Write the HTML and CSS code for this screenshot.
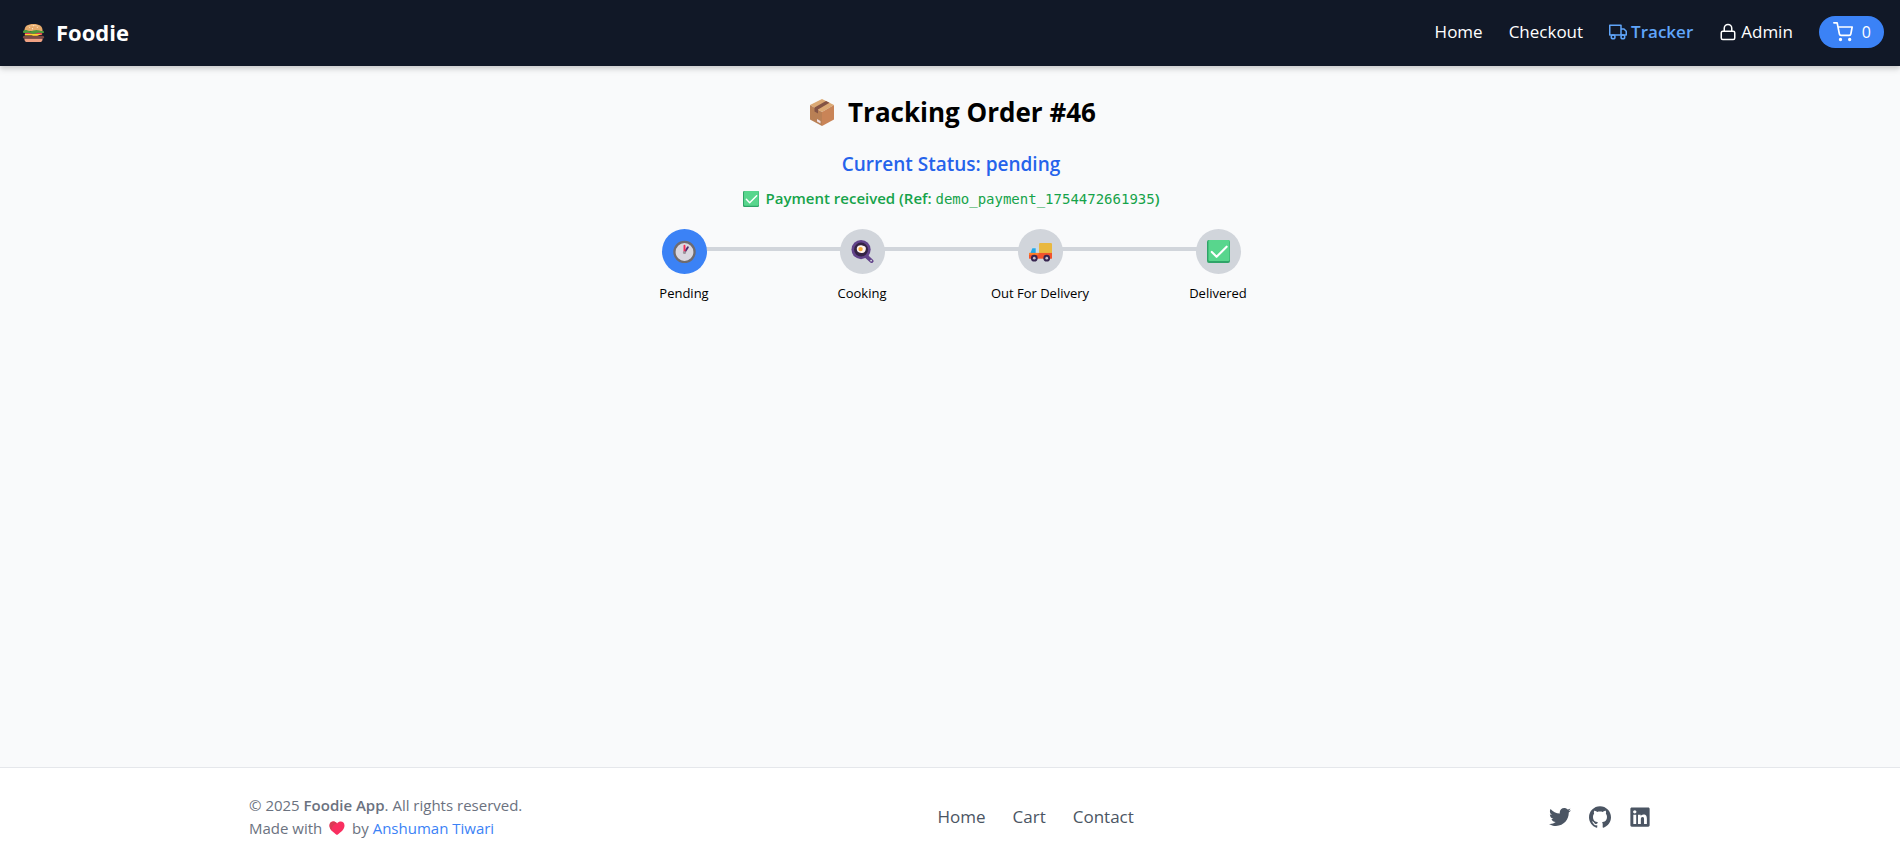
FILE: index.html
```html
<!DOCTYPE html>
<html lang="en">
<head>
<meta charset="utf-8">
<meta name="viewport" content="width=device-width, initial-scale=1">
<title>Foodie – Order Tracker</title>
<link rel="stylesheet" href="styles.css">
</head>
<body>
<svg class="defs" aria-hidden="true">
  <symbol id="check" viewBox="0 0 24 24">
    <rect x="0" y="0" width="24" height="24" rx="2" fill="#2fa468"/>
    <rect x="1.500" y="0" width="22" height="22" rx="1.500" fill="#58d68d"/>
    <path d="M5 12.500l5 5L20.500 7" fill="none" stroke="#fff" stroke-width="2.200" stroke-linecap="round" stroke-linejoin="round"/>
  </symbol>
</svg>
<header class="header">
  <a class="brand" href="#">
    <svg class="brand-icon" viewBox="0 0 24 24" aria-hidden="true">
      <path d="M2.500 10.500C2.500 5 6 3 12 3s9.500 2 9.500 7.500z" fill="#e5a96b"/>
      <path d="M5 6c2-2 10-3 14 0-4-1-10-1-14 0z" fill="#f3c58e"/>
      <g fill="#fff0d0"><circle cx="8" cy="6.500" r=".6"/><circle cx="12" cy="5" r=".6"/><circle cx="11" cy="8" r=".6"/><circle cx="16" cy="6.500" r=".6"/></g>
      <rect x="3" y="11.500" width="18" height="3" fill="#e8365d"/>
      <path d="M1 11.500c0-2 3-2.500 5-1.500s4 .8 6 0 4-1 6 0 5-.5 5 1.500-3 1-5 .7-4 1.300-6 1.300-4-1.500-6-1.300-5 1-5-.7z" fill="#4f9a3d"/>
      <path d="M3 13.500h18l-4 1.500-3 1.500-4-1.500H3z" fill="#ffd02f"/>
      <rect x="1" y="15.500" width="22" height="3" rx="1.500" fill="#7b4a45"/>
      <path d="M2.500 18.500h19c0 2.500-1 3.500-3 3.500h-13c-2 0-3-1-3-3.500z" fill="#f0a183"/>
    </svg>
    Foodie
  </a>
  <nav class="nav" aria-label="Main">
    <a href="#">Home</a>
    <a href="#">Checkout</a>
    <a class="with-icon active" href="#">
      <svg class="icon" viewBox="0 0 24 24" aria-hidden="true"><path d="M1 3h15v13H1z M16 8h4l3 3v5h-7z"/><circle cx="5.500" cy="18.500" r="2.500"/><circle cx="18.500" cy="18.500" r="2.500"/></svg>
      Tracker
    </a>
    <a class="with-icon" href="#">
      <svg class="icon" viewBox="0 0 24 24" aria-hidden="true"><rect x="3" y="11" width="18" height="11" rx="2"/><path d="M7 11V7a5 5 0 0 1 10 0v4"/></svg>
      Admin
    </a>
    <a class="cart" href="#" aria-label="Cart, 0 items">
      <svg class="cart-icon" viewBox="0 0 24 24" aria-hidden="true"><circle cx="9" cy="21" r="1"/><circle cx="20" cy="21" r="1"/><path d="M1 1h4l2.680 13.390a2 2 0 0 0 2 1.610h9.720a2 2 0 0 0 2-1.610L23 6H6"/></svg>
      <span>0</span>
    </a>
  </nav>
</header>
<main class="main">
  <h1 class="title">
    <svg class="title-icon" viewBox="0 0 24 27" aria-hidden="true">
      <path d="M12 0l12 6-12 7L0 6z" fill="#dba974"/>
      <path d="M0 6l12 7v14L0 20.500z" fill="#b98055"/>
      <path d="M24 6l-12 7v14l12-6.500z" fill="#c98457"/>
      <path d="M16 2l3.500 1.800L8 10.500v4L4.500 12.500v-4z" fill="#835344"/>
      <path d="M7 20l3.500 2v2.500L7 22.500z" fill="#f1e2e8"/>
    </svg>
    Tracking Order #46
  </h1>
  <p class="status">Current Status: pending</p>
  <p class="payment">
    <svg class="payment-icon" aria-hidden="true"><use href="#check"/></svg>
    <span>Payment received (Ref: <code>demo_payment_1754472661935</code>)</span>
  </p>
  <ol class="steps">
    <li class="step">
      <span class="dot current">
        <svg class="step-icon" viewBox="0 0 24 24" aria-hidden="true">
          <circle cx="12" cy="12.500" r="10.500" fill="#dad8e0" stroke="#6e6b70" stroke-width="2.400"/>
          <path d="M12 13l3.500-5.500" stroke="#4b2d70" stroke-width="2" stroke-linecap="round"/>
          <path d="M12 13V6" stroke="#f52b55" stroke-width="2" stroke-linecap="round"/>
          <circle cx="12" cy="13" r="1.600" fill="#9b98a0"/>
        </svg>
      </span>
      <span>Pending</span>
    </li>
    <li class="step">
      <span class="dot">
        <svg class="step-icon" viewBox="0 0 24 24" aria-hidden="true">
          <path d="M16 17l5.500 5" stroke="#62438a" stroke-width="4" stroke-linecap="round"/>
          <circle cx="21" cy="21.500" r="1" fill="#d1d5db"/>
          <circle cx="10.500" cy="10" r="10" fill="#62438a"/>
          <circle cx="10.500" cy="10" r="7.300" fill="#352345"/>
          <path d="M6 9c0-3 3-4 5-3.500s5 1 4.500 4-2 4.500-5 4S6 12 6 9z" fill="#fff4ee"/>
          <circle cx="10" cy="9.500" r="2.300" fill="#f8aa38"/>
        </svg>
      </span>
      <span>Cooking</span>
    </li>
    <li class="step">
      <span class="dot">
        <svg class="step-icon" viewBox="0 0 24 24" aria-hidden="true">
          <rect x="10.500" y="3" width="13.500" height="13" rx="1.200" fill="#e9b83f"/>
          <path d="M0 15l2.500-6c.5-1 1-1.500 2-1.500H10V16H0z" fill="#c8dbea"/>
          <path d="M1.500 13.500L3.500 8.500H7v5z" fill="#25a9e6"/>
          <path d="M0 13.500h24v6H0z" fill="#f2532c"/>
          <path d="M0 13.500h10v2H0z" fill="#ff8128"/>
          <g fill="#382650"><circle cx="5.500" cy="19" r="3.500"/><circle cx="18.500" cy="19" r="3.500"/></g>
          <g fill="#c7bfd0"><circle cx="5.500" cy="19" r="1.400"/><circle cx="18.500" cy="19" r="1.400"/></g>
        </svg>
      </span>
      <span>Out For Delivery</span>
    </li>
    <li class="step">
      <span class="dot"><svg class="step-icon" aria-hidden="true"><use href="#check"/></svg></span>
      <span>Delivered</span>
    </li>
  </ol>
</main>
<footer class="footer">
  <div class="footer-inner">
    <div class="legal">
      <p>© 2025 <strong>Foodie App</strong>. All rights reserved.</p>
      <p>Made with
        <svg class="heart" viewBox="0 0 16 16" role="img" aria-label="love"><path d="M8 15C4 12 .5 9.500.5 5.500.5 1 5.500.3 8 3.500 10.500.3 15.500 1 15.500 5.500 15.500 9.500 12 12 8 15z" fill="#f92f60"/><path d="M8 3.500C5.500.3.500 1 .5 5.500c0 2 1 4 2.500 5.300C2.500 7 4 4.500 8 3.500z" fill="#d93c55"/></svg>
        by <a href="#">Anshuman Tiwari</a></p>
    </div>
    <nav class="footer-nav" aria-label="Footer">
      <a href="#">Home</a>
      <a href="#">Cart</a>
      <a href="#">Contact</a>
    </nav>
    <div class="social">
      <a href="#" aria-label="Twitter"><svg viewBox="0 0 512 512"><path d="M459.370 151.716c.325 4.548.325 9.097.325 13.645 0 138.720-105.583 298.558-298.558 298.558-59.452 0-114.680-17.219-161.137-47.106 8.447.974 16.568 1.299 25.340 1.299 49.055 0 94.213-16.568 130.274-44.832-46.132-.975-84.792-31.188-98.112-72.772 6.498.974 12.995 1.624 19.818 1.624 9.421 0 18.843-1.300 27.614-3.573-48.081-9.747-84.143-51.980-84.143-102.985v-1.299c13.969 7.797 30.214 12.670 47.431 13.319-28.264-18.843-46.781-51.005-46.781-87.391 0-19.492 5.197-37.360 14.294-52.954 51.655 63.675 129.300 105.258 216.365 109.807-1.624-7.797-2.599-15.918-2.599-24.040 0-57.828 46.782-104.934 104.934-104.934 30.213 0 57.502 12.670 76.670 33.137 23.715-4.548 46.456-13.320 66.599-25.340-7.798 24.366-24.366 44.833-46.132 57.827 21.117-2.273 41.584-8.122 60.426-16.243-14.292 20.791-32.161 39.308-52.628 54.253z"/></svg></a>
      <a href="#" aria-label="GitHub"><svg viewBox="0 0 24 24"><path d="M12 .297c-6.630 0-12 5.373-12 12 0 5.303 3.438 9.800 8.205 11.385.6.113.82-.258.82-.577 0-.285-.01-1.040-.015-2.040-3.338.724-4.042-1.610-4.042-1.610C4.422 18.070 3.633 17.700 3.633 17.700c-1.087-.744.084-.729.084-.729 1.205.084 1.838 1.236 1.838 1.236 1.070 1.835 2.809 1.305 3.495.998.108-.776.417-1.305.76-1.605-2.665-.3-5.466-1.332-5.466-5.930 0-1.310.465-2.380 1.235-3.220-.135-.303-.54-1.523.105-3.176 0 0 1.005-.322 3.300 1.230.96-.267 1.980-.399 3-.405 1.020.006 2.040.138 3 .405 2.280-1.552 3.285-1.230 3.285-1.230.645 1.653.24 2.873.12 3.176.765.84 1.230 1.910 1.230 3.220 0 4.610-2.805 5.625-5.475 5.920.42.36.81 1.096.81 2.220 0 1.606-.015 2.896-.015 3.286 0 .315.21.69.825.57C20.565 22.092 24 17.592 24 12.297c0-6.627-5.373-12-12-12"/></svg></a>
      <a href="#" aria-label="LinkedIn"><svg viewBox="0 0 448 512"><path d="M416 32H31.900C14.300 32 0 46.500 0 64.300v383.400C0 465.500 14.300 480 31.900 480H416c17.600 0 32-14.500 32-32.300V64.300c0-17.800-14.400-32.300-32-32.300zM135.400 416H69V202.200h66.500V416zm-33.200-243c-21.300 0-38.500-17.300-38.500-38.500S80.900 96 102.200 96c21.200 0 38.500 17.300 38.500 38.500 0 21.300-17.200 38.500-38.500 38.500zm282.100 243h-66.400V312c0-24.800-.5-56.700-34.500-56.700-34.600 0-39.900 27-39.900 54.900V416h-66.400V202.200h63.700v29.200h.9c8.900-16.800 30.600-34.500 62.900-34.500 67.200 0 79.700 44.300 79.700 101.900V416z"/></svg></a>
    </div>
  </div>
</footer>
</body>
</html>
```
FILE: styles.css
```css
* { box-sizing: border-box; margin: 0; padding: 0; }

body {
  min-height: 100vh;
  display: flex;
  flex-direction: column;
  background: #f9fafb;
  color: #000;
  font-family: "Segoe UI", "Open Sans", "Noto Sans", sans-serif;
  font-size: 17px;
  line-height: 26px;
}

a { color: inherit; text-decoration: none; }
svg { display: block; flex: none; }
.defs { position: absolute; width: 0; height: 0; }

.header {
  display: flex;
  align-items: center;
  justify-content: space-between;
  padding: 16px 16px 18px 22px;
  background: #111827;
  color: #fff;
  box-shadow: 0 4px 6px rgba(0, 0, 0, 0.1), 0 2px 4px rgba(0, 0, 0, 0.1);
}

.brand { display: flex; align-items: center; gap: 11px; font-size: 22px; font-weight: 700; }
.brand-icon { width: 23px; height: 23px; }

.nav { display: flex; align-items: center; gap: 26px; }
.with-icon { display: flex; align-items: center; gap: 4px; }
.active { color: #60a5fa; font-weight: 600; }
.icon, .cart-icon {
  fill: none;
  stroke: currentColor;
  stroke-width: 2;
  stroke-linecap: round;
  stroke-linejoin: round;
}
.icon { width: 18px; height: 18px; }
.cart-icon { width: 20px; height: 20px; }
.cart {
  display: flex;
  align-items: center;
  gap: 9px;
  padding: 3px 13px 3px 14px;
  border-radius: 16px;
  background: #3b82f6;
  font-size: 16px;
}

.main {
  flex: 1;
  width: 100%;
  max-width: 756px;
  margin: 0 auto;
  padding: 26px 21px 26px 23px;
}
.title {
  display: flex;
  align-items: center;
  justify-content: center;
  gap: 14px;
  margin-bottom: 18px;
  padding-left: 4px;
  font-size: 26px;
  line-height: 40px;
}
.title-icon { width: 24px; height: 27px; }
.status {
  margin-bottom: 8px;
  text-align: center;
  color: #2563eb;
  font-size: 19px;
  font-weight: 600;
  line-height: 28px;
}
.payment {
  display: flex;
  align-items: center;
  justify-content: center;
  gap: 7px;
  margin-bottom: 18px;
  color: #16a34a;
  font-size: 15px;
  font-weight: 600;
  line-height: 24px;
}
.payment code { font-family: Consolas, "DejaVu Sans Mono", monospace; font-size: 14px; font-weight: 400; }
.payment-icon { width: 16px; height: 16px; }

.steps { display: flex; list-style: none; }
.step {
  position: relative;
  flex: 1;
  display: flex;
  flex-direction: column;
  align-items: center;
  gap: 10px;
  font-size: 13px;
  line-height: 18px;
}
.step + .step::before {
  content: "";
  position: absolute;
  top: 18px;
  right: 50%;
  width: 100%;
  height: 4px;
  background: #d1d5db;
}
.dot {
  position: relative;
  z-index: 1;
  display: flex;
  align-items: center;
  justify-content: center;
  width: 45px;
  height: 45px;
  border-radius: 50%;
  background: #d1d5db;
}
.current { z-index: 2; background: #3b82f6; }
.step-icon { width: 23px; height: 23px; }

.footer { border-top: 1px solid #e5e7eb; background: #fff; padding: 26px 24px 23px; }
.footer-inner {
  display: flex;
  align-items: center;
  justify-content: space-between;
  max-width: 1402px;
  margin: 0 auto;
}
.legal { color: #6b7280; font-size: 15px; line-height: 23px; }
.legal strong { font-weight: 600; }
.legal a { color: #3b82f6; }
.heart { display: inline-block; width: 16px; height: 16px; margin: 0 3px; vertical-align: -2px; }
.footer-nav { display: flex; gap: 27px; color: #4b5563; }
.social { display: flex; gap: 18px; color: #4b5563; }
.social svg { width: 22px; height: 22px; fill: currentColor; }
```
